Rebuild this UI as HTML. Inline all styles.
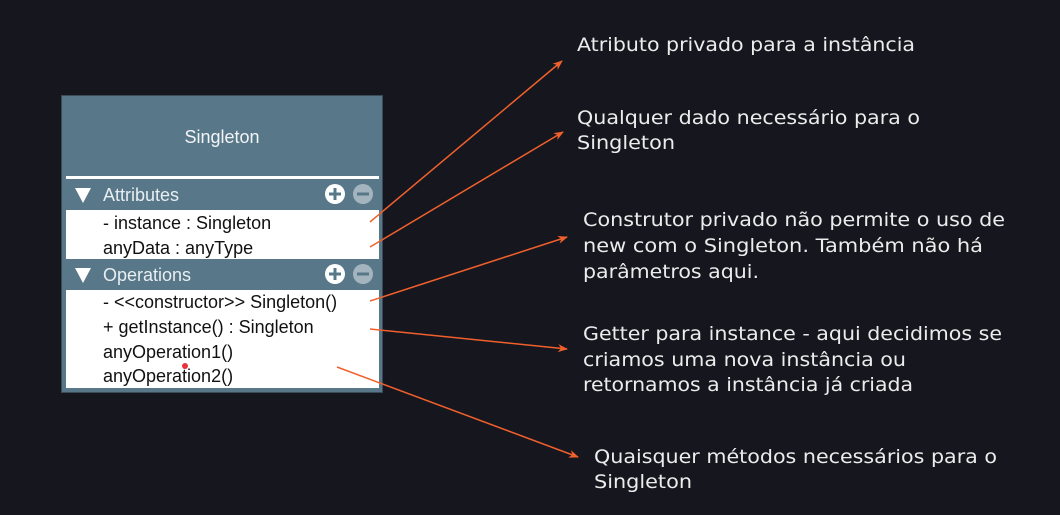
<!DOCTYPE html>
<html><head><meta charset="utf-8"><style>
html,body{margin:0;padding:0;background:#16161e;width:1060px;height:515px;overflow:hidden;font-family:"Liberation Sans",sans-serif}
.box{position:absolute;left:62px;top:96px;width:320px;height:296px;background:#587789;box-shadow:0 0 0 1px #3a4b58}
.t{position:absolute;white-space:nowrap}
.w{position:absolute;left:4px;width:313px;background:#fff}
.bar{position:absolute;left:0;width:320px;height:31px;color:#e8eef2;font-size:18px}
.row{position:absolute;left:41px;font-size:18px;color:#111;white-space:nowrap}
.circ{position:absolute;width:20px;height:20px;border-radius:50%;top:5px}
</style></head><body>
<div class="box">
  <div class="t" style="left:0;width:320px;text-align:center;top:31px;font-size:18px;color:#f2f5f7">Singleton</div>
  <div style="position:absolute;left:4px;width:313px;top:80px;height:3px;background:#fff"></div>
  <div class="bar" style="top:83px">
    <svg style="position:absolute;left:13px;top:9px" width="16" height="15"><path d="M0 0H16L8 15z" fill="#fff"/></svg>
    <div class="t" style="left:41px;top:6px">Attributes</div>
    <div class="circ" style="left:263px;background:#fff"><svg width="20" height="20"><path d="M10 4v12M4 10h12" stroke="#587789" stroke-width="3"/></svg></div>
    <div class="circ" style="left:291px;background:#a4b4be"><svg width="20" height="20"><path d="M4 10h12" stroke="#587789" stroke-width="3"/></svg></div>
  </div>
  <div class="w" style="top:114px;height:49px">
    <div class="row" style="left:37px;top:3px">- instance : Singleton</div>
    <div class="row" style="left:37px;top:28px">anyData : anyType</div>
  </div>
  <div class="bar" style="top:163px">
    <svg style="position:absolute;left:13px;top:9px" width="16" height="15"><path d="M0 0H16L8 15z" fill="#fff"/></svg>
    <div class="t" style="left:41px;top:6px">Operations</div>
    <div class="circ" style="left:263px;background:#fff"><svg width="20" height="20"><path d="M10 4v12M4 10h12" stroke="#587789" stroke-width="3"/></svg></div>
    <div class="circ" style="left:291px;background:#a4b4be"><svg width="20" height="20"><path d="M4 10h12" stroke="#587789" stroke-width="3"/></svg></div>
  </div>
  <div class="w" style="top:194px;height:98px">
    <div class="row" style="left:37px;top:2px">- &lt;&lt;constructor&gt;&gt; Singleton()</div>
    <div class="row" style="left:37px;top:27px">+ getInstance() : Singleton</div>
    <div class="row" style="left:37px;top:52px">anyOperation1()</div>
    <div class="row" style="left:37px;top:76px">anyOperation2()</div>
    <div style="position:absolute;left:116px;top:73px;width:6px;height:6px;border-radius:50%;background:#e8323c"></div>
  </div>
</div>
<svg width="1060" height="515" style="position:absolute;left:0;top:0">
<defs><marker id="a" markerWidth="10" markerHeight="8" refX="9" refY="4" orient="auto" markerUnits="userSpaceOnUse"><path d="M0 0L10 4L0 8L3 4z" fill="#f0602c"/></marker></defs>
<g stroke="#f0602c" stroke-width="1.5" fill="none" marker-end="url(#a)">
<line x1="370" y1="222" x2="562" y2="61"/>
<line x1="370" y1="247" x2="563" y2="132"/>
<line x1="370" y1="301" x2="567" y2="237"/>
<line x1="370" y1="329" x2="567" y2="349"/>
<line x1="337" y1="367" x2="578" y2="457"/>
</g>
<g fill="#ececec" font-family="DejaVu Sans, sans-serif" font-size="19">
<text x="577" y="51" textLength="338" lengthAdjust="spacingAndGlyphs">Atributo privado para a instância</text>
<text x="577" y="124" textLength="343" lengthAdjust="spacingAndGlyphs">Qualquer dado necessário para o</text>
<text x="577" y="149" textLength="98" lengthAdjust="spacingAndGlyphs">Singleton</text>
<text x="583" y="226" textLength="422" lengthAdjust="spacingAndGlyphs">Construtor privado não permite o uso de</text>
<text x="583" y="252" textLength="400" lengthAdjust="spacingAndGlyphs">new com o Singleton. Também não há</text>
<text x="583" y="278" textLength="176" lengthAdjust="spacingAndGlyphs">parâmetros aqui.</text>
<text x="583" y="340" textLength="419" lengthAdjust="spacingAndGlyphs">Getter para instance - aqui decidimos se</text>
<text x="583" y="366" textLength="323" lengthAdjust="spacingAndGlyphs">criamos uma nova instância ou</text>
<text x="583" y="391" textLength="330" lengthAdjust="spacingAndGlyphs">retornamos a instância já criada</text>
<text x="594" y="463" textLength="403" lengthAdjust="spacingAndGlyphs">Quaisquer métodos necessários para o</text>
<text x="594" y="488" textLength="98" lengthAdjust="spacingAndGlyphs">Singleton</text>
</g>
</svg>
</body></html>
